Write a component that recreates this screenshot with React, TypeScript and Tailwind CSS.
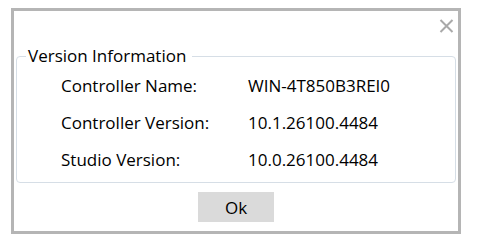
export default function App() {
  const rows = [
    { label: "Controller Name:", value: "WIN-4T850B3REI0" },
    { label: "Controller Version:", value: "10.1.26100.4484" },
    { label: "Studio Version:", value: "10.0.26100.4484" },
  ];

  return (
    <div className="w-[479px] h-[251px] bg-white pl-[11px] pt-[8px] font-['Open_Sans',sans-serif] text-black">
      <div className="w-[450px] h-[226px] border-[3px] border-[#b5b5b5] flex flex-col">
        <div className="h-[34px] flex justify-end items-start pt-[8px] pr-[4px]">
          <svg width="15" height="14" viewBox="0 0 15 14" className="block">
            <path d="M1.5 1 L13.5 13 M13.5 1 L1.5 13" stroke="#a9a9a9" strokeWidth="2" fill="none" />
          </svg>
        </div>

        <fieldset className="mx-[2px] h-[138px] rounded-[4px] border border-[#d6dee6] pb-[3px]">
          <legend className="ml-[9px] pl-[2px] pr-[6px] text-[17px] leading-[22px]">Version Information</legend>
          <div className="grid grid-cols-[187px_1fr] pl-[44px] text-[17px] leading-[37px]">
            {rows.map((r) => (
              <div key={r.label} className="contents">
                <span>{r.label}</span>
                <span>{r.value}</span>
              </div>
            ))}
          </div>
        </fieldset>

        <div className="flex justify-center pt-[9px]">
          <button className="w-[76px] h-[30px] bg-[#dadada] text-[17px] leading-none">Ok</button>
        </div>
      </div>
    </div>
  );
}
